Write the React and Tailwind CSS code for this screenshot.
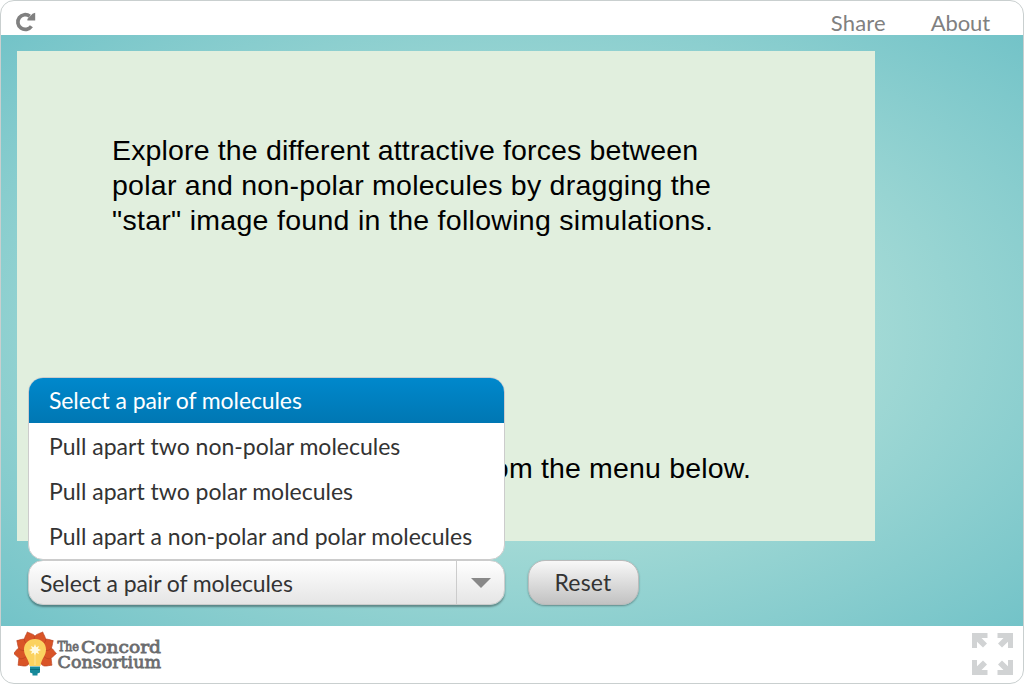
const options = [
  "Pull apart two non-polar molecules",
  "Pull apart two polar molecules",
  "Pull apart a non-polar and polar molecules",
];

function ReloadIcon() {
  return (
    <svg className="mt-[11px] ml-[14px] h-5 w-[21px]" viewBox="0 0 21 20" fill="none">
      <path d="M16.4 14.200A7.400 7.400 0 1 1 14.800 4.200" stroke="#808080" strokeWidth="3.7" />
      <path d="M20.200 0.800V8.600H12.400V7L17.500 1.800Z" fill="#808080" />
    </svg>
  );
}

function Logo() {
  return (
    <svg className="h-[50px] w-[152px]" viewBox="0 0 152 50">
      <g fill="#d95427" stroke="#b8401f" strokeWidth=".6">
        {[-128, 128, -94, 94, -58, 58, -21, 21].map((a) => (
          <path key={a} transform={`rotate(${a} 21 24)`} d="M15.500 12C14 7.500 18 6 21 2.500C24 6 28 7.500 26.500 12L21 24Z" />
        ))}
      </g>
      <path d="M21 11C14.500 11 10 15.500 10 21.500C10 28 14.500 30 15.500 38H26.500C27.500 30 32 28 32 21.500C32 15.500 27.500 11 21 11Z" fill="#fbd260" />
      <path d="M21 16L22.200 19.200L25 18L24 20.800L27 22L24 23.200L25 26L22.200 24.800L21 28L19.800 24.800L17 26L18 23.200L15 22L18 20.800L17 18L19.800 19.200Z" fill="#fffbe4" />
      <path d="M20.300 27H21.700V37H20.300Z" fill="#fde08a" />
      <path d="M16 38.500H26V44.500L23.500 45.500V47.500H18.500V45.500L16 44.500Z" fill="#16899a" />
      <path d="M16 41H26V42H16Z" fill="#096c7c" />
      <g fill="#6b6c6e" fontFamily="'DejaVu Serif', serif" stroke="#6b6c6e" strokeWidth=".8">
        <text x="43.500" y="22.800" fontSize="12" textLength="21.500" lengthAdjust="spacingAndGlyphs">The</text>
        <text x="67" y="24.800" fontSize="17.500" textLength="80" lengthAdjust="spacingAndGlyphs">Concord</text>
        <text x="43.500" y="39.800" fontSize="17.500" textLength="103.500" lengthAdjust="spacingAndGlyphs">Consortium</text>
      </g>
    </svg>
  );
}

function FullscreenIcon() {
  return (
    <svg className="h-[42px] w-[41px]" viewBox="0 0 41 42" fill="#d1d3d4">
      {["", "translate(41 0) scale(-1 1)", "translate(0 42) scale(1 -1)", "translate(41 42) scale(-1 -1)"].map((t) => (
        <path key={t} transform={t} d="M0 0H15.500V5H9.500L15 10.500L11 14.500L5 8.800V15H0Z" />
      ))}
    </svg>
  );
}

export default function App() {
  return (
    <div className="flex h-[684px] w-[1024px] flex-col overflow-hidden rounded-[14px] border border-[#c9cfcf] bg-white font-['Lato',sans-serif]">
      <header className="flex h-[34px] shrink-0 justify-between">
        <ReloadIcon />
        <nav className="flex gap-[45px] pt-[7px] pr-[33px] text-[22px] leading-[30px] text-[#808080]">
          <span className="tracking-[0.15px]">Share</span>
          <span className="tracking-[-0.1px]">About</span>
        </nav>
      </header>
      <main className="h-[591px] shrink-0 bg-[radial-gradient(ellipse_at_center,#d0efe2_0%,#73c3c8_100%)] pt-4 pl-4">
        <section className="h-[490px] w-[858px] bg-[#e1efde] pt-[82px] pl-[95px] font-['Liberation_Sans',sans-serif] text-[28.500px] leading-[35px] text-black">
          <p className="whitespace-nowrap">
            <span className="tracking-[0.15px]">Explore the different attractive forces between</span>
            <br />
            <span className="tracking-[0.25px]">polar and non-polar molecules by dragging the</span>
            <br />
            <span className="tracking-[0.29px]">"star" image found in the following simulations.</span>
          </p>
          <p className="mt-[213px] w-[639px] text-right tracking-[0.17px] whitespace-nowrap">from the menu below.</p>
        </section>
        <div className="flex pt-[19px] pl-[11px] text-[23px] text-[#333]">
          <div className="relative">
            <div className="flex h-[45px] w-[477px] overflow-hidden rounded-[15px] border border-[#ccc] bg-linear-to-b from-white to-[#e5e5e5] shadow-[0_2px_2px_rgba(0,0,0,.35)]">
              <span className="flex-1 pl-[11px] leading-[44px] tracking-[-0.1px]">Select a pair of molecules</span>
              <span className="flex w-[48px] items-center justify-center border-l border-[#ccc]">
                <svg className="h-[10px] w-5" viewBox="0 0 20 10"><path d="M0 0H20L10 10Z" fill="#888" /></svg>
              </span>
            </div>
            <ul className="absolute bottom-[45px] left-0 h-[183px] w-[477px] overflow-hidden rounded-[15px] border border-[#ccc] bg-white">
              <li className="h-[45px] bg-linear-to-b from-[#0088cc] to-[#0077b3] pl-5 leading-[44px] tracking-[-0.1px] text-white">Select a pair of molecules</li>
              {options.map((o) => (
                <li key={o} className="h-[45px] pl-5 leading-[47px]">{o}</li>
              ))}
            </ul>
          </div>
          <button className="ml-[23px] h-[45px] w-[111px] rounded-[17px] border border-[#bbb] bg-linear-to-b from-[#f8f8f8] to-[#c2c2c2] pr-[1px] tracking-[0.2px] shadow-[0_1px_2px_rgba(0,0,0,.35)]">Reset</button>
        </div>
      </main>
      <footer className="flex flex-1 justify-between pt-[2px] pr-[10px] pl-[13px]">
        <Logo />
        <div className="pt-[5px]"><FullscreenIcon /></div>
      </footer>
    </div>
  );
}
